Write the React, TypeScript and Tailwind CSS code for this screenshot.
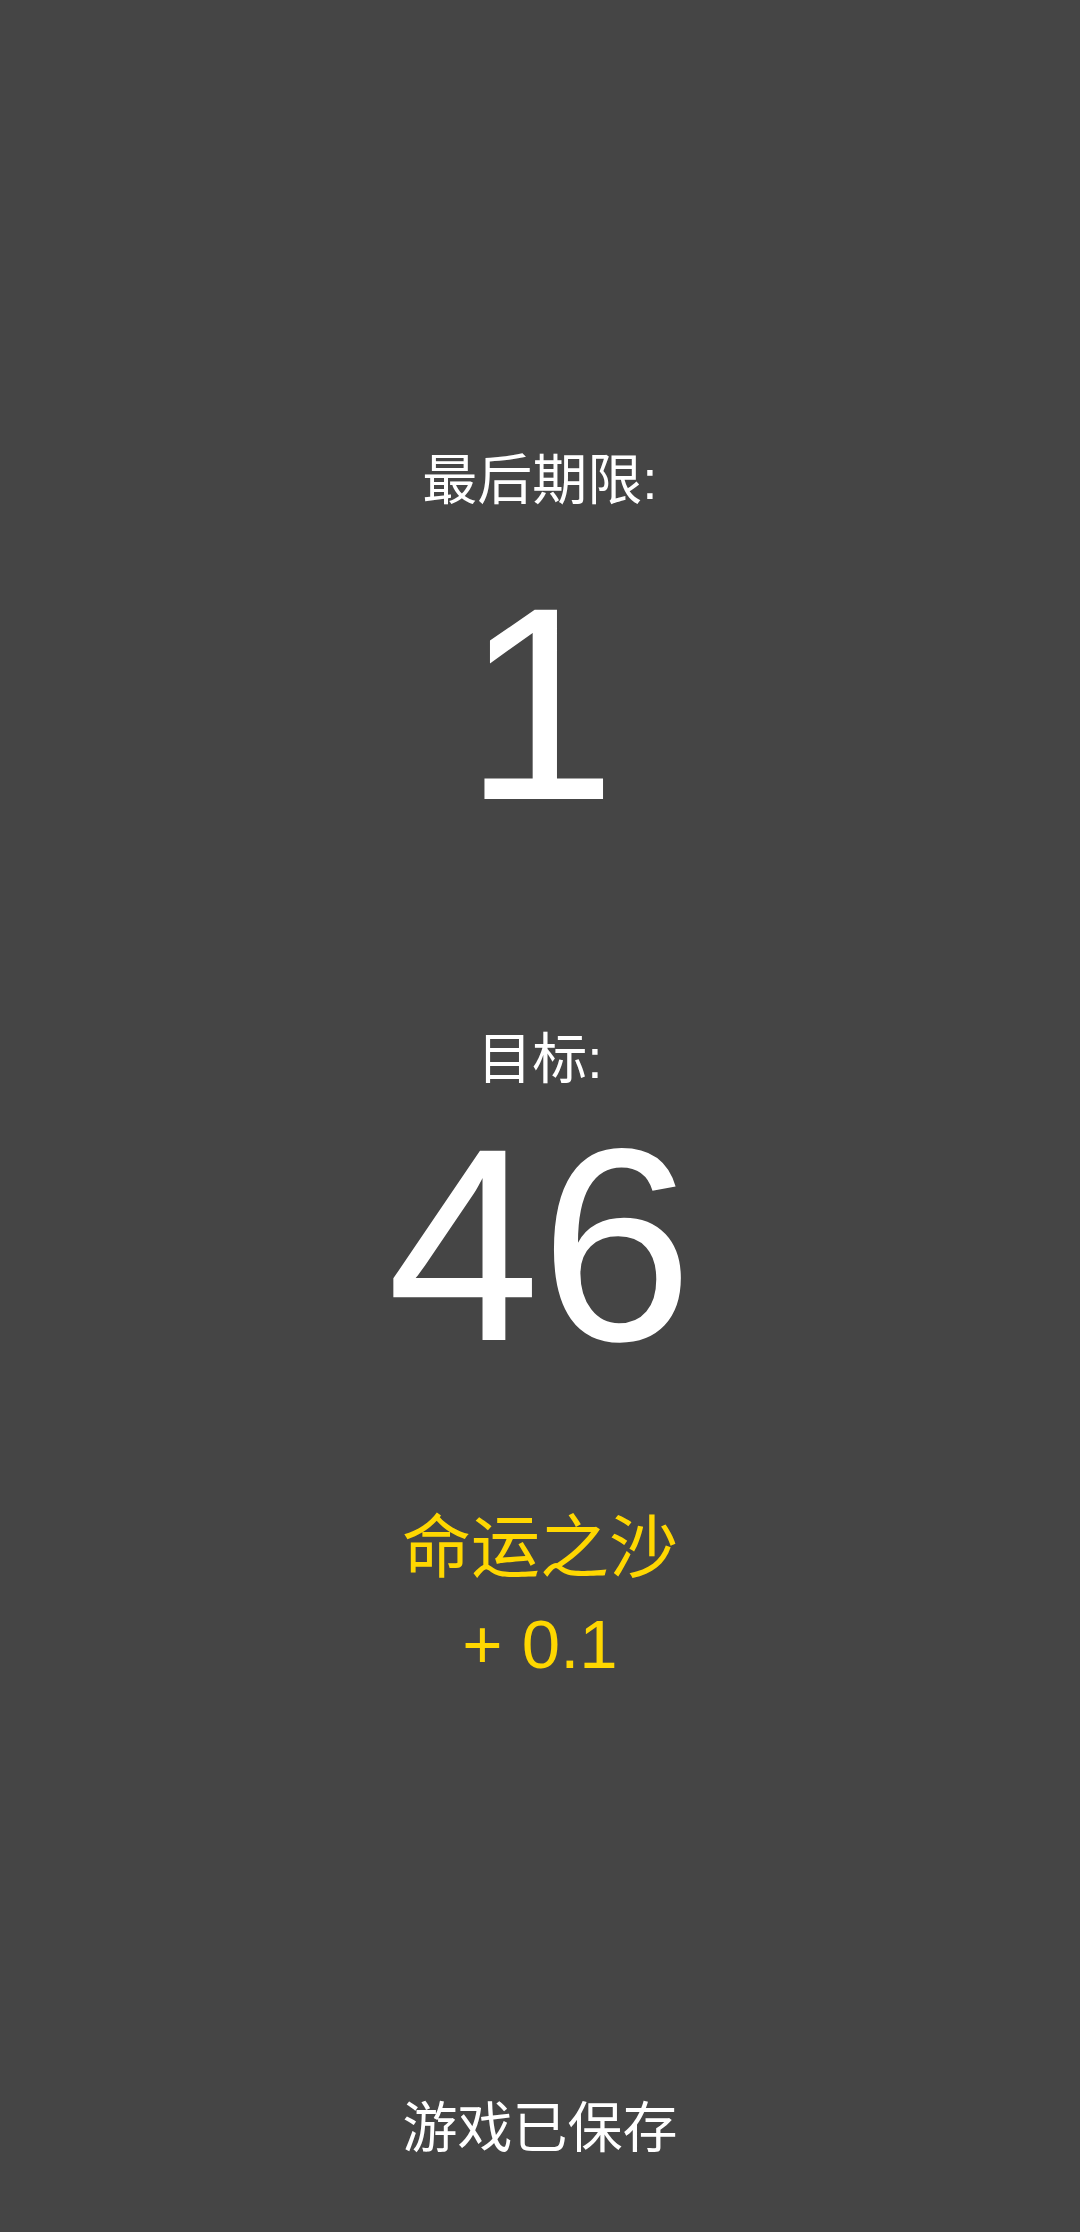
export default function App() {
  return (
    <div
      className="h-screen w-full bg-[#454545] flex flex-col items-center text-center text-white"
      style={{ fontFamily: '"Liberation Sans", "Noto Sans CJK SC", sans-serif' }}
    >
      <section className="pt-[448px] flex flex-col items-center">
        <div className="text-[55px] leading-[64px]">最后期限:</div>
        <div className="mt-[42px] text-[275px] leading-[300px]">1</div>

        <div className="mt-[173px] text-[55px] leading-[64px]">目标:</div>
        <div className="mt-[4px] text-[275px] leading-[300px]">46</div>

        <div className="mt-[114px] text-[69px] leading-[80px] text-[#ffd700]">命运之沙</div>
        <div className="mt-[16px] text-[69px] leading-[80px] text-[#ffd700]">+ 0.1</div>
      </section>

      <footer className="mt-auto pb-[72px] text-[55px] leading-[64px]">游戏已保存</footer>
    </div>
  );
}
